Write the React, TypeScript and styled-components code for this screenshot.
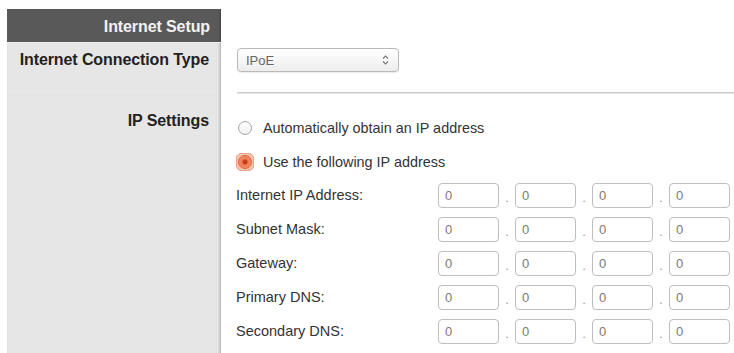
import styled, { createGlobalStyle } from "styled-components"

const GlobalStyle = createGlobalStyle`
  html, body {
    margin: 0;
    padding: 0;
    background: #ffffff;
  }
  body {
    font-family: "Liberation Sans", Arial, sans-serif;
    color: #333333;
  }
`

const Page = styled.div`
  width: 734px;
  height: 353px;
  padding: 9px 0 0 7px;
  box-sizing: border-box;
  overflow: hidden;
  display: grid;
  grid-template-columns: 214px 1fr;
  grid-template-rows: 34px 52px 1fr;
`

const SideHeader = styled.div`
  background: #595959;
  border-bottom: 1px solid #f2f2f2;
  box-shadow: inset -2px 0 2px -1px rgba(0, 0, 0, 0.25);
  color: #f2f2f2;
  font-weight: 700;
  font-size: 16px;
  letter-spacing: -0.1px;
  display: flex;
  align-items: center;
  justify-content: flex-end;
  padding: 2px 11px 0 0;
`

const SideLabel = styled.div<{ $top: number }>`
  background: #e6e6e6;
  box-shadow: inset -3px 0 3px -2px rgba(0, 0, 0, 0.28);
  color: #222222;
  font-weight: 700;
  font-size: 16px;
  letter-spacing: -0.1px;
  text-align: right;
  padding: ${p => p.$top}px 12px 0 0;
`

const Blank = styled.div``

const TypeCell = styled.div`
  padding: 5px 0 0 16px;
  display: flex;
  flex-direction: column;
`

const SelectBox = styled.div`
  width: 162px;
  height: 24px;
  box-sizing: border-box;
  border: 1px solid #b9b9b9;
  border-radius: 4px;
  background: linear-gradient(#ffffff, #ededed);
  box-shadow: 0 1px 1px rgba(0, 0, 0, 0.08);
  display: flex;
  align-items: center;
  justify-content: space-between;
  padding: 0 9px 0 8px;
  font-size: 13px;
  color: #666666;
`

const Divider = styled.div`
  margin-top: 20px;
  border-top: 1px solid #c9c9ce;
  border-bottom: 1px solid #e6e6ea;
`

const SettingsCell = styled.div`
  padding: 16px 0 0 15px;
  display: flex;
  flex-direction: column;
`

const RadioRow = styled.div<{ $h: number }>`
  height: ${p => p.$h}px;
  display: flex;
  align-items: center;
  gap: 9px;
  font-size: 14.4px;
  color: #333333;
`

const RadioWrap = styled.div<{ $active?: boolean }>`
  width: 18px;
  height: 18px;
  box-sizing: border-box;
  border-radius: 5px;
  display: flex;
  align-items: center;
  justify-content: center;
  background: ${p => (p.$active ? "#f6c3ad" : "transparent")};
  border: 1px solid ${p => (p.$active ? "#eaa488" : "transparent")};
`

const RadioDot = styled.div<{ $on?: boolean }>`
  width: 14px;
  height: 14px;
  box-sizing: border-box;
  border-radius: 50%;
  border: 1px solid ${p => (p.$on ? "#e0603a" : "#a5a5a5")};
  background: ${p =>
    p.$on
      ? "radial-gradient(circle, #c63d1a 0 2px, #ef7a55 3px, #f59a79 100%)"
      : "linear-gradient(#ffffff, #f0f0f0)"};
`

const FieldRow = styled.div`
  height: 34px;
  display: flex;
  align-items: center;
`

const FieldLabel = styled.div`
  width: 202px;
  font-size: 14.5px;
  color: #333333;
`

const Octets = styled.div`
  display: flex;
  align-items: center;
`

const Octet = styled.div`
  width: 61px;
  height: 25px;
  box-sizing: border-box;
  border: 1px solid #bdbdbd;
  border-radius: 4px;
  background: #ffffff;
  display: flex;
  align-items: center;
  padding-left: 6px;
  font-size: 13px;
  color: #7a7a7a;
`

const Sep = styled.div`
  width: 16px;
  text-align: center;
  font-size: 13px;
  color: #9a9a9a;
  padding-top: 4px;
`

function Stepper() {
  return (
    <svg width="7" height="12" viewBox="0 0 7 12">
      <path d="M1 4.5 L3.5 2 L6 4.5" fill="none" stroke="#777" strokeWidth="1.1" />
      <path d="M1 7.5 L3.5 10 L6 7.5" fill="none" stroke="#777" strokeWidth="1.1" />
    </svg>
  )
}

const fields = [
  "Internet IP Address:",
  "Subnet Mask:",
  "Gateway:",
  "Primary DNS:",
  "Secondary DNS:",
]

export default function App() {
  return <>
    <GlobalStyle />
    <Page>
      <SideHeader>Internet Setup</SideHeader>
      <Blank />

      <SideLabel $top={8}>Internet Connection Type</SideLabel>
      <TypeCell>
        <SelectBox>
          <span>IPoE</span>
          <Stepper />
        </SelectBox>
        <Divider />
      </TypeCell>

      <SideLabel $top={17}>IP Settings</SideLabel>
      <SettingsCell>
        <RadioRow $h={34}>
          <RadioWrap><RadioDot /></RadioWrap>
          Automatically obtain an IP address
        </RadioRow>
        <RadioRow $h={33}>
          <RadioWrap $active><RadioDot $on /></RadioWrap>
          Use the following IP address
        </RadioRow>
        {fields.map(label => (
          <FieldRow key={label}>
            <FieldLabel>{label}</FieldLabel>
            <Octets>
              {[0, 1, 2, 3].map(i => (
                <Octets key={i}>
                  {i > 0 && <Sep>.</Sep>}
                  <Octet>0</Octet>
                </Octets>
              ))}
            </Octets>
          </FieldRow>
        ))}
      </SettingsCell>
    </Page>
  </>
}
